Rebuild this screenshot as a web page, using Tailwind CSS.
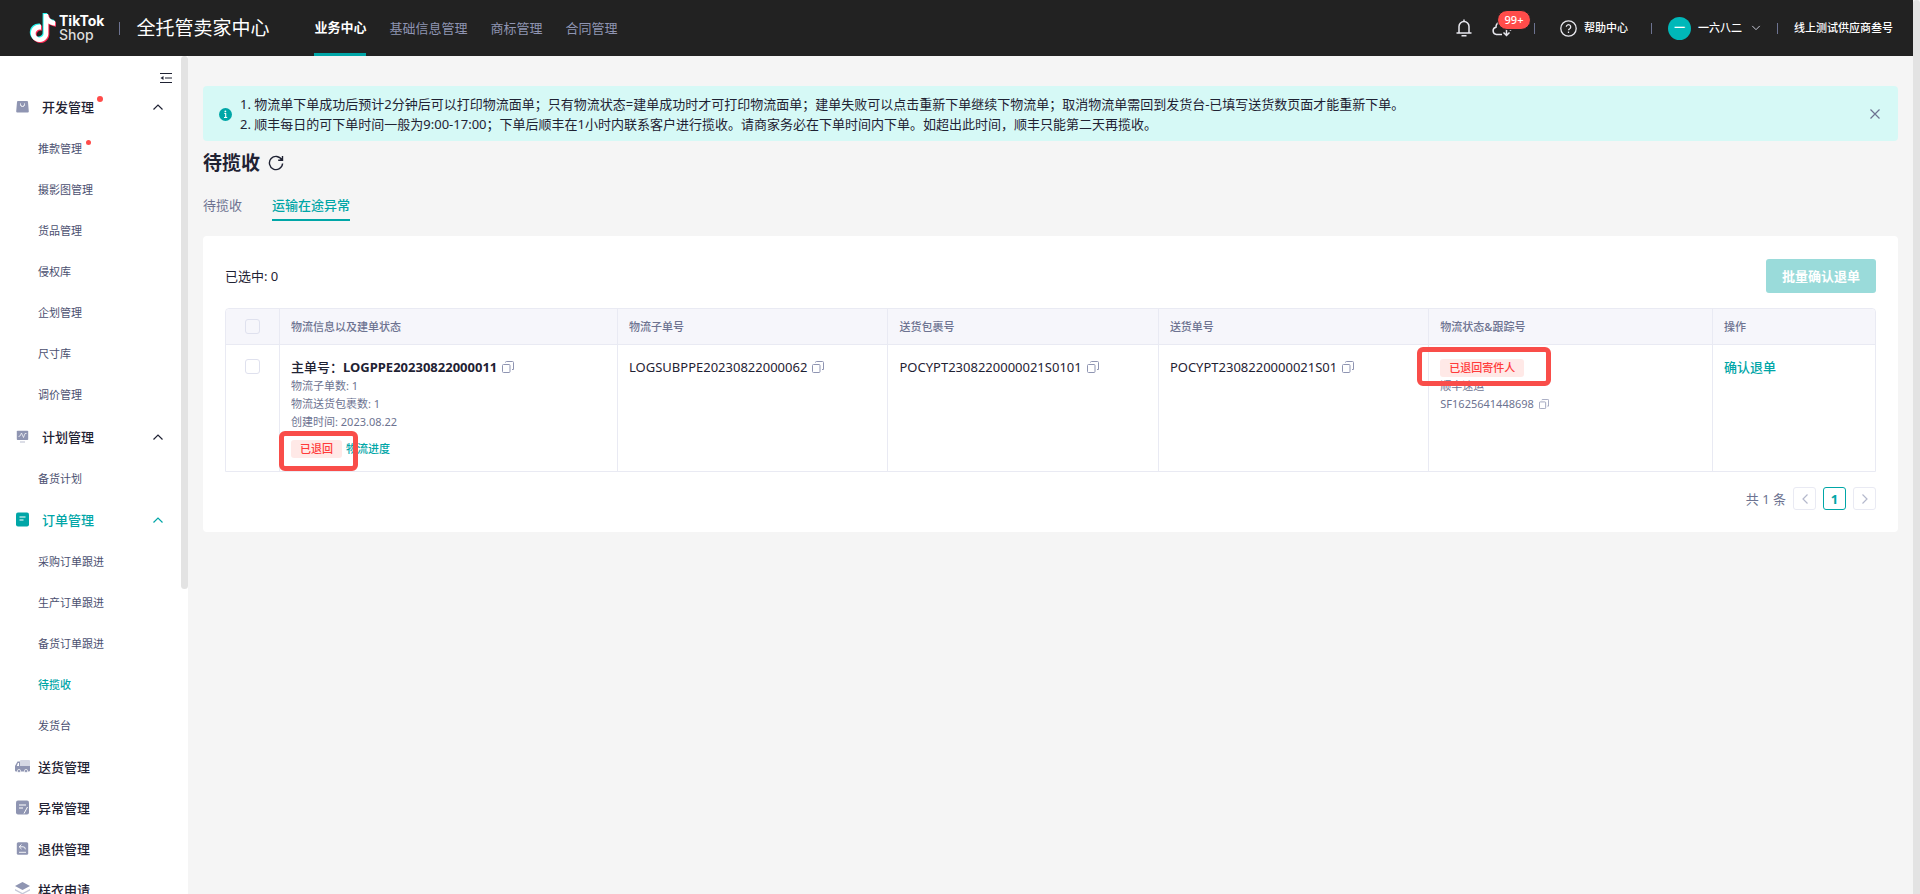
<!DOCTYPE html>
<html lang="zh-CN">
<head>
<meta charset="utf-8">
<meta name="viewport" content="width=device-width, initial-scale=1">
<title>全托管卖家中心</title>
<script src="https://cdn.jsdelivr.net/npm/@tailwindcss/browser@4"></script>
</head>
<body class="flex h-screen overflow-hidden bg-[#f5f5f5] font-['Noto_Sans','Noto_Sans_CJK_SC',sans-serif] text-[13px] leading-5 text-[#1f2233]">
<svg class="hidden" aria-hidden="true">
  <symbol id="up" viewBox="0 0 12 12"><path d="M1.5 8.5 6 4l4.500 4.500" fill="none" stroke="currentColor" stroke-width="1.200"/></symbol>
  <symbol id="copy" viewBox="0 0 12 12"><path d="M.5 4.500a1 1 0 0 1 1-1H7a1 1 0 0 1 1 1v6a1 1 0 0 1-1 1H1.500a1 1 0 0 1-1-1zM3.500 1.500a1 1 0 0 1 1-1h6a1 1 0 0 1 1 1V8.500h-1.500" fill="none" stroke="currentColor"/></symbol>
  <symbol id="note" viewBox="0 0 24 24"><path d="M12.525.02c1.31-.02 2.61-.01 3.91-.02.08 1.53.63 3.09 1.75 4.17 1.12 1.11 2.7 1.62 4.24 1.79v4.03c-1.44-.05-2.89-.35-4.2-.97-.57-.26-1.1-.59-1.62-.93-.01 2.92.01 5.84-.02 8.75-.08 1.4-.54 2.79-1.35 3.94-1.31 1.92-3.58 3.17-5.91 3.21-1.43.08-2.86-.31-4.08-1.03-2.02-1.19-3.44-3.37-3.65-5.71-.02-.5-.03-1-.01-1.49.18-1.9 1.12-3.72 2.58-4.96 1.66-1.44 3.98-2.13 6.15-1.72.02 1.48-.04 2.96-.04 4.44-.99-.32-2.15-.23-3.02.37-.63.41-1.11 1.04-1.36 1.75-.21.51-.15 1.07-.14 1.61.24 1.64 1.82 3.02 3.5 2.87 1.12-.01 2.19-.66 2.77-1.61.19-.33.4-.67.41-1.06.1-1.79.06-3.57.07-5.36.01-4.03-.01-8.05.02-12.07z"/></symbol>
</svg>

<div class="flex min-w-0 flex-1 flex-col">
  <header class="flex h-14 shrink-0 items-center bg-[#222] pr-5 pl-[29px] text-white">
    <a href="#" class="flex items-center gap-[3px]" aria-label="TikTok Shop">
      <svg class="h-[30px] w-[27px]" viewBox="0 0 27 30">
        <use href="#note" x="-1" y="0" width="28" height="28" fill="#25f4ee"/>
        <use href="#note" x="1" y="2" width="28" height="28" fill="#fe2c55"/>
        <use href="#note" x="0" y="1" width="28" height="28" fill="#fff"/>
      </svg>
      <span class="flex flex-col font-['Inter',sans-serif] text-sm leading-[14px]"><b class="font-bold">TikTok</b><span class="font-medium text-[#ddd]">Shop</span></span>
    </a>
    <span class="ml-[15px] h-[13px] w-px bg-[#6d7391]"></span>
    <h1 class="ml-4 text-[19px] leading-6">全托管卖家中心</h1>
    <nav class="ml-[45px] flex h-14 gap-[23px] text-[#8f95b2]">
      <a href="#" class="flex items-center border-t border-b-3 border-t-transparent border-b-[#00a6a7] font-bold text-white">业务中心</a>
      <a href="#" class="flex items-center">基础信息管理</a>
      <a href="#" class="flex items-center">商标管理</a>
      <a href="#" class="flex items-center">合同管理</a>
    </nav>
    <div class="ml-auto flex items-center text-[11px] font-medium">
      <button aria-label="通知"><svg class="h-[18px] w-4" viewBox="0 0 16 18" fill="none" stroke="#e8e8ee" stroke-width="1.500"><path d="M3 13.500V7.500a5 5 0 0 1 10 0v6M.5 14h15M5.500 16.800h5M8 .5v2"/></svg></button>
      <button class="relative ml-5" aria-label="下载"><svg class="h-[18px] w-5" viewBox="0 0 20 18" fill="none" stroke="#e8e8ee" stroke-width="1.500"><path d="M10 15.500H4.500A3.700 3.700 0 0 1 4 8.200a5.500 5.500 0 0 1 11-.5 4 4 0 0 1 3.500 4M14.500 9v7.500m-3-3 3 3 3-3"/></svg>
        <span class="absolute -top-[9px] left-[5px] h-5 w-[34px] rounded-full border border-[#222] bg-[#ff4c4a] leading-[18px]">99+</span></button>
      <span class="ml-[22px] h-[11px] w-px bg-[#6d7391]"></span>
      <a href="#" class="ml-[25px] flex items-center gap-[7px]"><svg class="size-[17px]" viewBox="0 0 17 17" fill="none" stroke="#e8e8ee" stroke-width="1.300"><circle cx="8.500" cy="8.500" r="7.700"/><path d="M6.300 6.800a2.200 2.200 0 1 1 3.300 2c-.8.400-1.100.7-1.100 1.500M8.500 11.500v1.500"/></svg>帮助中心</a>
      <span class="ml-[23px] h-[11px] w-px bg-[#6d7391]"></span>
      <button class="ml-4 flex items-center gap-[7px]"><span class="flex size-[23px] items-center justify-center rounded-full bg-[#00b8b9]">一</span>一六八二<svg class="ml-0.5 h-2.5 w-2.5 rotate-180 text-[#c8cad8]"><use href="#up"/></svg></button>
      <span class="ml-4 h-[11px] w-px bg-[#6d7391]"></span>
      <span class="ml-4">线上测试供应商叁号</span>
    </div>
  </header>

  <div class="flex min-h-0 flex-1">
    <aside class="flex w-[188px] shrink-0 overflow-hidden bg-white">
      <nav class="flex-1">
        <div class="flex h-[30px] items-end justify-end pr-[9px]"><button aria-label="收起菜单" class="flex pb-[2px]"><svg class="size-3" viewBox="0 0 12 12" fill="none" stroke="#1f2233" stroke-width="1.200"><path d="M0 1.500h12M5 6h7M0 10.500h12"/><path d="M3.500 4v4L.5 6z" fill="#1f2233" stroke="none"/></svg></button></div>
        <div class="mb-px">
          <button class="flex h-[41px] w-full items-center pr-[17px] pl-4 font-medium"><svg class="mr-[13px] size-[13px]" viewBox="0 0 13 13"><path d="M2 1h9a1 1 0 0 1 1 1l.8 9.500a1 1 0 0 1-1 1H1.200a1 1 0 0 1-1-1L1 2a1 1 0 0 1 1-1z" fill="#8f95b2"/><path d="M4.500 3.500v1a2 2 0 0 0 4 0v-1" fill="none" stroke="#fff"/></svg>开发管理<i class="mb-4 ml-[3px] size-1.5 rounded-full bg-[#ff4c4a]"></i><svg class="ml-auto size-3"><use href="#up"/></svg></button>
          <ul class="pt-px text-[11px] text-[#4b5070]">
            <li><a href="#" class="flex h-[41px] items-center pl-[38px]">推款管理<i class="mb-3 ml-1 size-[5px] rounded-full bg-[#ff4c4a]"></i></a></li>
            <li><a href="#" class="flex h-[41px] items-center pl-[38px]">摄影图管理</a></li>
            <li><a href="#" class="flex h-[41px] items-center pl-[38px]">货品管理</a></li>
            <li><a href="#" class="flex h-[41px] items-center pl-[38px]">侵权库</a></li>
            <li><a href="#" class="flex h-[41px] items-center pl-[38px]">企划管理</a></li>
            <li><a href="#" class="flex h-[41px] items-center pl-[38px]">尺寸库</a></li>
            <li><a href="#" class="flex h-[41px] items-center pl-[38px]">调价管理</a></li>
          </ul>
        </div>
        <div>
          <button class="flex h-[41px] w-full items-center pr-[17px] pl-4 font-medium"><svg class="mr-[13px] size-[13px]" viewBox="0 0 13 13"><rect x=".8" y=".8" width="11.400" height="9.200" rx=".8" fill="#8f95b2"/><path d="M2.500 6.500 4 6l1.500-3 2 4.500L9 3.500h1.500" fill="none" stroke="#fff" stroke-width=".7"/><path d="M4 12h5" stroke="#c5c8d8" stroke-width="1.200"/></svg>计划管理<svg class="ml-auto size-3"><use href="#up"/></svg></button>
          <ul class="pt-px text-[11px] text-[#4b5070]">
            <li><a href="#" class="flex h-[41px] items-center pl-[38px]">备货计划</a></li>
          </ul>
        </div>
        <div>
          <button class="flex h-[41px] w-full items-center pr-[17px] pl-4 font-medium text-[#00a6a7]"><svg class="mr-[13px] h-[15px] w-[13px]" viewBox="0 0 13 15"><rect y=".5" width="13" height="14" rx="2" fill="currentColor"/><path d="M3.500 5h6M3.500 8h4" stroke="#fff" stroke-width="1.100"/></svg>订单管理<svg class="ml-auto size-3"><use href="#up"/></svg></button>
          <ul class="pt-px text-[11px] text-[#4b5070]">
            <li><a href="#" class="flex h-[41px] items-center pl-[38px]">采购订单跟进</a></li>
            <li><a href="#" class="flex h-[41px] items-center pl-[38px]">生产订单跟进</a></li>
            <li><a href="#" class="flex h-[41px] items-center pl-[38px]">备货订单跟进</a></li>
            <li><a href="#" class="flex h-[41px] items-center pl-[38px] font-medium text-[#00a6a7]">待揽收</a></li>
            <li><a href="#" class="flex h-[41px] items-center pl-[38px]">发货台</a></li>
          </ul>
        </div>
        <a href="#" class="flex h-[41px] items-center gap-2 pl-[15px] font-medium"><svg class="h-[13px] w-[15px]" viewBox="0 0 15 13"><path d="M5 1a1 1 0 0 1 1-1h8a1 1 0 0 1 1 1v6H5z" fill="#d5d8e4"/><path d="M2.500 1.500H5V6h10v4.500a1 1 0 0 1-1 1H1a1 1 0 0 1-1-1V6z" fill="#8f95b2"/><path d="M1.800 6 3 3h1v3z" fill="#fff"/><circle cx="4" cy="11" r="1.600" fill="#8f95b2" stroke="#fff" stroke-width=".7"/><circle cx="11" cy="11" r="1.600" fill="#8f95b2" stroke="#fff" stroke-width=".7"/></svg>送货管理</a>
        <a href="#" class="flex h-[41px] items-center gap-[9px] pl-4 font-medium"><svg class="h-[15px] w-[13px]" viewBox="0 0 13 15"><rect y=".5" width="13" height="14" rx="2" fill="#8f95b2"/><path d="M3 5h7M3 8h4M11.500 7 8 13.500" stroke="#fff" fill="none"/></svg>异常管理</a>
        <a href="#" class="flex h-[41px] items-center gap-[9px] pl-4 font-medium"><svg class="size-[13px]" viewBox="0 0 13 13"><rect x=".8" y=".3" width="11.400" height="12.400" rx="1.500" fill="#8f95b2"/><path d="M5.500 2.500 3.200 4.800l2.300 2.300M3.500 4.800H7a2.300 2.300 0 0 1 2.300 2.500M3 10.300h7" stroke="#fff" stroke-width=".9" fill="none"/></svg>退供管理</a>
        <a href="#" class="flex h-[41px] items-center gap-2 pl-[15px] font-medium"><svg class="h-[15px] w-[15px]" viewBox="0 0 15 15"><path d="M7.500 0 15 4 7.500 8 0 4z" fill="#8f95b2"/><path d="m0 7 7.500 4L15 7v1.500l-7.500 4-7.500-4z" fill="#c5c8d8"/></svg>样衣申请</a>
      </nav>
      <div class="h-[533px] w-[7px] rounded-full bg-[#e3e3e3]"></div>
    </aside>

    <main class="min-w-0 flex-1 px-[15px] pt-[30px]">
      <div class="flex items-center rounded bg-[#d6f9f6] pt-2 pr-[18px] pb-[7px] pl-4">
        <svg class="mr-2 size-[13px] shrink-0" viewBox="0 0 13 13"><circle cx="6.500" cy="6.500" r="6.500" fill="#00a6a7"/><path d="M5.300 5.500h1.400v4M5 9.500h3.200" stroke="#fff" stroke-width="1.100" fill="none"/><circle cx="6.400" cy="3.400" r=".9" fill="#fff"/></svg>
        <p>1. 物流单下单成功后预计2分钟后可以打印物流面单；只有物流状态=建单成功时才可打印物流面单；建单失败可以点击重新下单继续下物流单；取消物流单需回到发货台-已填写送货数页面才能重新下单。<br>2. 顺丰每日的可下单时间一般为9:00-17:00；下单后顺丰在1小时内联系客户进行揽收。请商家务必在下单时间内下单。如超出此时间，顺丰只能第二天再揽收。</p>
        <button class="ml-auto" aria-label="关闭"><svg class="size-2.5" viewBox="0 0 10 10"><path d="m.5.5 9 9m0-9-9 9" stroke="#6d7391" stroke-width="1.200"/></svg></button>
      </div>

      <div class="mt-[10px] flex items-center gap-2">
        <h2 class="text-[19px] leading-6 font-bold">待揽收</h2>
        <button aria-label="刷新"><svg class="size-4" viewBox="0 0 16 16" fill="none" stroke="#1f2233" stroke-width="1.400"><path d="M13.800 4.800A6.600 6.600 0 1 0 14.600 8.500M14.500 1v4.300h-4.300"/></svg></button>
      </div>
      <div class="mt-[20px] flex gap-[30px] text-[#6d7391]">
        <button class="border-b-2 border-transparent pb-1">待揽收</button>
        <button class="border-b-2 border-[#00a6a7] pb-1 font-medium text-[#00a6a7]">运输在途异常</button>
      </div>

      <section class="mt-[15px] rounded bg-white px-[22px] pt-[23px] pb-[22px]">
        <div class="flex items-center justify-between">
          <span>已选中: 0</span>
          <button class="h-[34px] rounded-[3px] bg-[#9adbda] px-4 font-bold text-white">批量确认退单</button>
        </div>
        <div class="mt-[15px] rounded-t border border-[#e9eaf3]">
          <table class="w-full table-fixed border-separate border-spacing-0 text-left">
            <colgroup><col class="w-[54px]"><col class="w-[20.5%]"><col class="w-[16.4%]"><col class="w-[16.4%]"><col class="w-[16.4%]"><col class="w-[17.2%]"><col></colgroup>
            <thead>
              <tr class="h-9 bg-[#f6f6fb] text-[11px] text-[#6d7391]">
                <th class="rounded-tl border-r border-b border-[#e9eaf3]"><input type="checkbox" aria-label="全选" class="mx-auto block size-[15px] appearance-none rounded-[3px] border border-[#dfe1ee] bg-[#f6f6fb]"></th>
                <th class="border-r border-b border-[#e9eaf3] pl-[11px] font-medium">物流信息以及建单状态</th>
                <th class="border-r border-b border-[#e9eaf3] pl-[11px] font-medium">物流子单号</th>
                <th class="border-r border-b border-[#e9eaf3] pl-[11px] font-medium">送货包裹号</th>
                <th class="border-r border-b border-[#e9eaf3] pl-[11px] font-medium">送货单号</th>
                <th class="border-r border-b border-[#e9eaf3] pl-[11px] font-medium">物流状态&amp;跟踪号</th>
                <th class="rounded-tr border-b border-[#e9eaf3] pl-[11px] font-medium">操作</th>
              </tr>
            </thead>
            <tbody>
              <tr class="align-top">
                <td class="border-r border-[#e9eaf3] pt-[14px]"><input type="checkbox" aria-label="选择该单" class="mx-auto block size-[15px] appearance-none rounded-[3px] border border-[#dfe1ee] bg-white"></td>
                <td class="relative border-r border-[#e9eaf3] pt-3 pb-[13px] pl-[11px] text-[11px] leading-[18px] text-[#6d7391]">
                  <div class="flex items-center gap-[5px] text-[13px] leading-5 font-bold text-[#1f2233]"><span><span class="font-medium">主单号：</span>LOGPPE20230822000011</span><button aria-label="复制" class="text-[#8f95b2]"><svg class="size-3"><use href="#copy"/></svg></button></div>
                  <p>物流子单数: 1</p>
                  <p>物流送货包裹数: 1</p>
                  <p>创建时间: 2023.08.22</p>
                  <div class="mt-[9px] flex items-center gap-1 font-medium"><span class="rounded-[3px] bg-[#ffe9e7] px-[9px] text-[#ff3b3b]">已退回</span><a href="#" class="text-[#00a6a7]">物流进度</a></div>
                  <span class="absolute bottom-0 -left-px h-10 w-[79px] rounded-md border-5 border-[#f94d49]"></span>
                </td>
                <td class="border-r border-[#e9eaf3] pt-3 pl-[11px]"><div class="flex items-center gap-[5px]">LOGSUBPPE20230822000062<button aria-label="复制" class="text-[#8f95b2]"><svg class="size-3"><use href="#copy"/></svg></button></div></td>
                <td class="border-r border-[#e9eaf3] pt-3 pl-[11px]"><div class="flex items-center gap-[5px]">POCYPT2308220000021S0101<button aria-label="复制" class="text-[#8f95b2]"><svg class="size-3"><use href="#copy"/></svg></button></div></td>
                <td class="border-r border-[#e9eaf3] pt-3 pl-[11px]"><div class="flex items-center gap-[5px]">POCYPT2308220000021S01<button aria-label="复制" class="text-[#8f95b2]"><svg class="size-3"><use href="#copy"/></svg></button></div></td>
                <td class="relative border-r border-[#e9eaf3] pt-[14px] pl-[11px] text-[11px] leading-[18px] text-[#6d7391]">
                  <span class="inline-block rounded-[3px] bg-[#ffe9e7] px-[9px] font-medium text-[#ff3b3b]">已退回寄件人</span>
                  <p>顺丰速运</p>
                  <div class="flex items-center gap-[5px]">SF1625641448698<button aria-label="复制" class="text-[#8f95b2]"><svg class="size-[10px]"><use href="#copy"/></svg></button></div>
                  <span class="absolute top-0.5 -left-3 h-[39px] w-[134px] rounded-md border-5 border-[#f94d49]"></span>
                </td>
                <td class="pt-3 pl-[11px]"><a href="#" class="font-medium text-[#00a6a7]">确认退单</a></td>
              </tr>
            </tbody>
          </table>
        </div>
        <div class="mt-[15px] flex items-center justify-end gap-[7px] text-[#6d7391]">
          <span>共 1 条</span>
          <button aria-label="上一页" class="flex size-[23px] items-center justify-center rounded-[3px] border border-[#e9eaf3] text-[#b4b8cc]"><svg class="size-3 -rotate-90"><use href="#up"/></svg></button>
          <button class="size-[23px] rounded-[3px] border border-[#00a6a7] font-bold text-[#00a6a7]">1</button>
          <button aria-label="下一页" class="flex size-[23px] items-center justify-center rounded-[3px] border border-[#e9eaf3] text-[#b4b8cc]"><svg class="size-3 rotate-90"><use href="#up"/></svg></button>
        </div>
      </section>
    </main>
  </div>
</div>
<div class="w-[7px] shrink-0 rounded-t-full bg-[#e3e3e3]"></div>
</body>
</html>
